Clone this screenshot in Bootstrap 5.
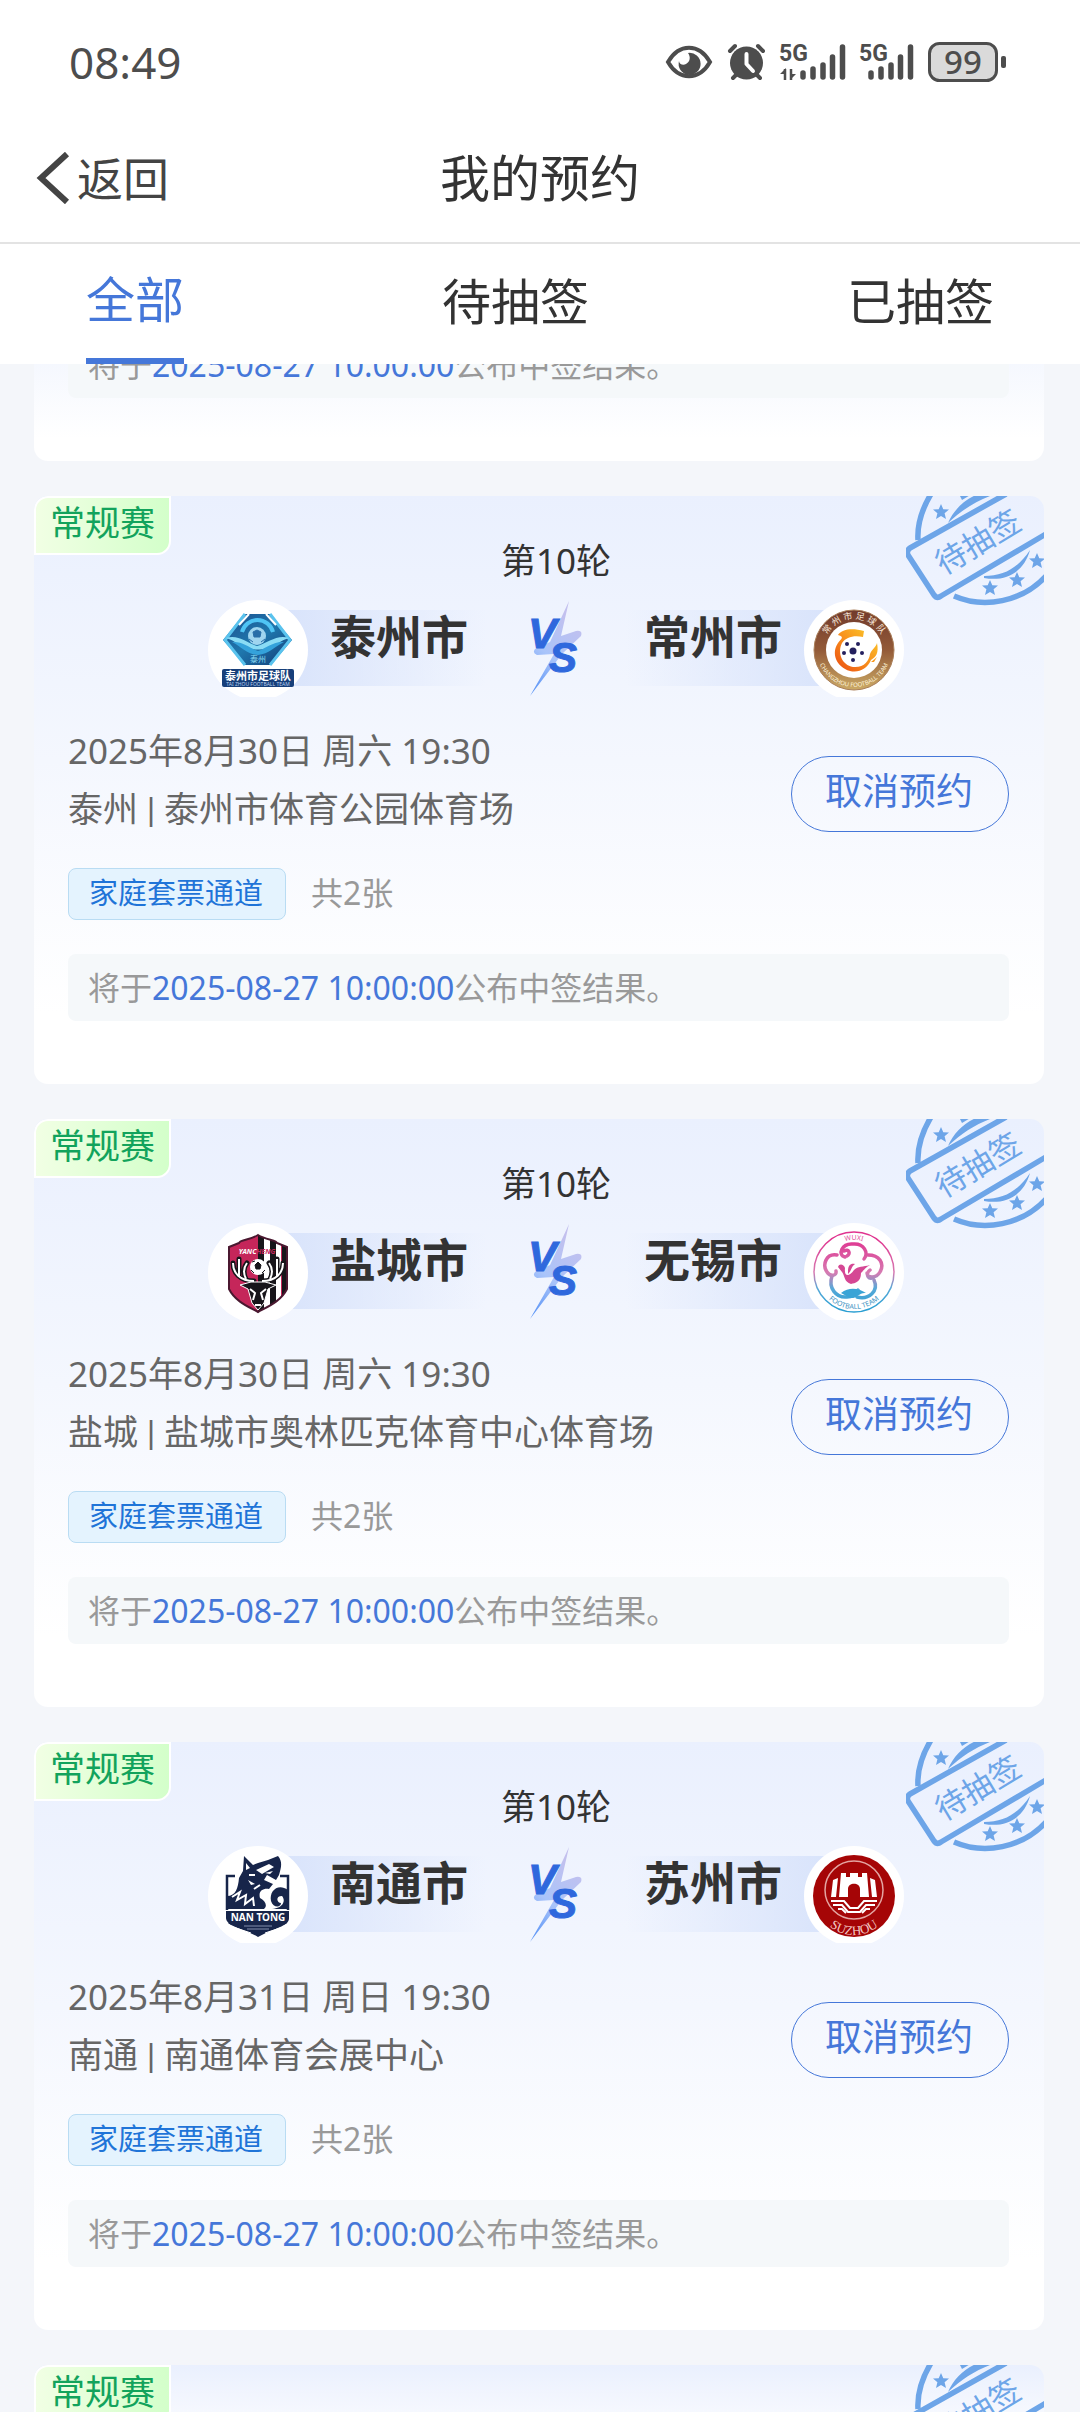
<!DOCTYPE html>
<html lang="zh-CN">
<head>
<meta charset="utf-8">
<meta name="viewport" content="width=device-width, initial-scale=1">
<title>我的预约</title>
<link rel="stylesheet" href="https://cdn.jsdelivr.net/npm/bootstrap@5.3.0/dist/css/bootstrap.min.css">
<style>
  :root { --brand: #4577d9; --ink: #333; --soft: #666; --faint: #999; }
  body { font-family: "Noto Sans", "Noto Sans CJK SC", sans-serif; color: var(--ink); background: #f4f6fa; }
  .status-bar { height: 114px; padding: 10px 74px 0 69px; color: #4d4d4d; }
  .clock { font-size: 44px; line-height: 56px; }
  .status-icons { gap: 14px; }
  .title-bar { height: 130px; border-bottom: 2px solid #e3e3e3; padding: 0 36px; }
  .title-bar h1 { font-size: 50px; line-height: 64px; font-weight: 400; }
  .back-link { gap: 7px; font-size: 46px; line-height: 64px; color: #444; }
  .side { flex: 1 1 0; }
  .tab-strip { padding: 0 86px; height: 120px; }
  .tab-strip .nav-link { padding: 25px 0 0; font-size: 49px; line-height: 64px; color: var(--ink); height: 120px; border: 0; border-radius: 0; background: none; }
  .tab-strip .nav-link.active { padding-top: 23px; color: var(--brand); background: none; border-bottom: 6px solid var(--brand); }
  .booking-list { padding: 0 36px 0 34px; gap: 35px; }
  .scrolled-card { height: 97px; }
  .match-card { background: linear-gradient(180deg, #eaf0fe 0%, #f4f7fe 45%, #fff 88%); border-radius: 14px; flex-shrink: 0; }
  .kind-tag { top: 0; left: 0; padding: 0 14px 6px; font-size: 35px; line-height: 49px; color: #12a35c; border: 2px solid #fff; border-radius: 14px 0; background: linear-gradient(90deg, #f1ffe4, #d3ffca); }
  .stamp { top: 0; right: 0; }
  .fixture { padding: 40px 0 0 34px; }
  .round-name { font-size: 35px; line-height: 50px; }
  .teams { margin-top: 14px; }
  .crest { z-index: 1; }
  .team-name { margin-top: 10px; height: 76px; font-size: 46px; line-height: 52px; font-weight: 700; }
  .team-home { margin-left: -30px; padding: 0 42px 0 52px; background: linear-gradient(90deg, #d8e3fb, #d8e3fb00 90%); }
  .team-away { margin-right: -30px; padding: 0 52px 0 42px; background: linear-gradient(270deg, #d8e3fb, #d8e3fb00 90%); }
  .versus { margin: 0 20px; }
  .versus text { font-family: "Liberation Sans", Arial, sans-serif; }
  .details { padding: 25px 35px 63px 34px; }
  .where { font-size: 35px; line-height: 58px; color: var(--soft); }
  .bar { font-family: Roboto, sans-serif; line-height: 1; }
  .btn-cancel { width: 218px; height: 76px; margin-bottom: 6px; padding: 0 2px 6px 0; font-size: 37px; line-height: 60px; color: var(--brand); border: 1px solid var(--brand); border-radius: 38px; }
  .ticket-row { margin-top: 30px; gap: 25px; }
  .channel-tag { height: 52px; padding: 0 22px 0 20px; font-size: 29px; line-height: 47px; color: #1f74d8; background: #e4f3fe; border: 1px solid #b9dcf3; border-radius: 8px; }
  .ticket-count { font-size: 32px; line-height: 50px; color: var(--faint); }
  .notice { margin-top: 34px; padding: 0 20px; font-size: 32px; line-height: 67px; height: 67px; color: var(--faint); background: #f5f8fa; border-radius: 8px; }
  .notice time { color: var(--brand); }
  svg { display: block; flex-shrink: 0; }
  svg text { font-family: "Noto Sans", "Noto Sans CJK SC", sans-serif; }
  .status-icons svg { overflow: visible; }
  .status-icons .net-label { font-family: Roboto, sans-serif; font-size: 23px; font-weight: 700; fill: #4d4d4d; }
</style>
</head>
<body>
<svg class="position-absolute" width="0" height="0" aria-hidden="true">
  <defs>
    <linearGradient id="boltFill" x1="0" y1="1" x2="0.4" y2="0"><stop offset="0" stop-color="#4f8df5"/><stop offset=".5" stop-color="#a9c4fa"/><stop offset="1" stop-color="#c3c0ee"/></linearGradient>
    <linearGradient id="blueFill" x1="0" y1="0" x2="1" y2="1"><stop offset="0" stop-color="#1c4f8e"/><stop offset=".5" stop-color="#1f77ad"/><stop offset="1" stop-color="#123a75"/></linearGradient>
    <linearGradient id="brownFill" x1="0" y1="0" x2="0" y2="1"><stop offset="0" stop-color="#713a2c"/><stop offset=".5" stop-color="#935a38"/><stop offset="1" stop-color="#cbaa66"/></linearGradient>
    <linearGradient id="flameFill" x1="0" y1="1" x2="1" y2="0"><stop offset="0" stop-color="#ea4a12"/><stop offset=".5" stop-color="#f8901c"/><stop offset="1" stop-color="#fbd02c"/></linearGradient>
    <linearGradient id="wuxiFill" gradientUnits="userSpaceOnUse" x1="0" y1="15" x2="0" y2="85"><stop offset="0" stop-color="#e0338f"/><stop offset=".5" stop-color="#d67bb2"/><stop offset=".72" stop-color="#58a9d8"/><stop offset="1" stop-color="#2c9fd2"/></linearGradient>
  </defs>
  <symbol id="star" viewBox="-8 -8 16 16"><path d="M0-8 2.3-2.8 8-2.4 3.6 1.2 5 7 0 4-5 7-3.6 1.2-8-2.4-2.3-2.8Z"/></symbol>
  <symbol id="stampArt" viewBox="0 0 138 110">
    <g fill="none" stroke="#6da5e8" stroke-width="5.500">
      <path d="M12 44C11 28 16 13 25-2"/>
      <path d="M48 100C78 113 116 106 140 80"/>
      <path d="M100-2 4 52Q0 55 2 59L28 99Q31 103 35 100L140 38" stroke-linejoin="round"/>
    </g>
    <g fill="#6da5e8">
      <path d="M42 27C48 13 60 2 75-3H92C72 4 58 12 42 27Z"/>
      <path d="M53-2H66L56 4Z"/>
      <path d="M78 80C98 80 112 72 124 54C118 76 100 86 78 82Z"/>
      <use href="#star" x="27" y="8" width="16" height="16"/>
      <use href="#star" x="76" y="84" width="16" height="16"/>
      <use href="#star" x="103" y="76" width="16" height="16"/>
      <use href="#star" x="123" y="57" width="16" height="16"/>
    </g>
  </symbol>
  <symbol id="bolt" viewBox="0 0 52 97">
    <path d="M39 1 20 42 5 49Q2 53 7 55L24 54 0 96 32 54 51 36Q53 30 46 31L31 36Z" fill="url(#boltFill)"/>
  </symbol>
</svg>

<div class="vh-100 d-flex flex-column overflow-hidden">
  <header class="bg-white flex-shrink-0">
    <div class="status-bar d-flex align-items-center justify-content-between">
      <span class="clock">08:49</span>
      <div class="status-icons d-flex align-items-center">
        <svg width="48" height="40" viewBox="0 0 48 40"><path d="M3 20C14 1 34 1 45 20C34 39 14 39 3 20Z" fill="none" stroke="#4d4d4d" stroke-width="4"/><path d="M23 11A11 11 0 1 1 14 19C14 22 18 24 21 22C25 20 26 15 23 11Z" fill="#4d4d4d"/></svg>
        <svg width="39" height="40" viewBox="0 0 39 40"><g stroke="#4d4d4d" stroke-width="4" stroke-linecap="round"><path d="M3 9 8 4M36 9 31 4M6 36 11 31M33 36 28 31"/></g><circle cx="19.500" cy="21" r="16.500" fill="#4d4d4d"/><path d="M19.500 12V22L26 29" fill="none" stroke="#fff" stroke-width="4" stroke-linecap="round" stroke-linejoin="round"/></svg>
        <svg width="66" height="40" viewBox="0 0 66 40"><text x="-1" y="19" class="net-label">5G</text><path d="M0 32 6 26V32M10 32V38L16 32" fill="#4d4d4d"/><path d="M5 27V38M11 27V38" stroke="#4d4d4d" stroke-width="2.500"/><g stroke="#4d4d4d" stroke-width="5.500" stroke-linecap="round"><path d="M23 31V35M33 27V35M43 23V35M52.500 15V35M62.500 5V35"/></g></svg>
        <svg width="54" height="40" viewBox="0 0 54 40"><text x="-1" y="19" class="net-label">5G</text><g stroke="#4d4d4d" stroke-width="5.500" stroke-linecap="round"><path d="M11 31V35M21 27V35M31 23V35M40.500 15V35M50.500 5V35"/></g></svg>
        <svg width="78" height="40" viewBox="0 0 78 40"><rect x="1.500" y="1.500" width="67" height="37" rx="10" fill="#dadada" stroke="#4d4d4d" stroke-width="3"/><rect x="73" y="14" width="5" height="12" rx="2" fill="#4d4d4d"/><text x="35" y="32" font-size="33" font-weight="500" text-anchor="middle" fill="#4d4d4d">99</text></svg>
      </div>
    </div>
    <div class="title-bar d-flex align-items-center">
      <div class="side"><a href="#" class="back-link d-inline-flex align-items-center text-decoration-none"><svg width="34" height="52" viewBox="0 0 34 52" fill="none" stroke="#444" stroke-width="6"><path d="M31 2 5 26 31 50"/></svg>返回</a></div>
      <h1 class="m-0">我的预约</h1>
      <div class="side"></div>
    </div>
    <nav class="tab-strip nav justify-content-between">
      <a class="nav-link active" aria-current="page" href="#">全部</a>
      <a class="nav-link" href="#">待抽签</a>
      <a class="nav-link" href="#">已抽签</a>
    </nav>
  </header>

  <main class="booking-list d-flex flex-column flex-grow-1 overflow-hidden">
    <div class="scrolled-card d-flex flex-column justify-content-end overflow-hidden flex-shrink-0">
      <article class="match-card">
        <div class="details"><p class="notice mb-0">将于<time>2025-08-27 10:00:00</time>公布中签结果。</p></div>
      </article>
    </div>

    <article class="match-card position-relative overflow-hidden">
      <span class="kind-tag position-absolute">常规赛</span>
      <svg class="stamp position-absolute" width="138" height="110" viewBox="0 0 138 110"><use href="#stampArt"/><text transform="translate(72 46) rotate(-31)" y="11" font-size="31" text-anchor="middle" fill="#6da5e8">待抽签</text></svg>
      <div class="fixture text-center">
        <div class="round-name">第10轮</div>
        <div class="teams d-flex justify-content-center">
          <svg class="crest position-relative" width="100" height="97" viewBox="0 0 100 97">
            <circle cx="50" cy="50" r="50" fill="#fff"/>
            <path d="M36 14H62L84 40 63 65H37L15 40Z" fill="url(#blueFill)"/>
            <path d="M37 14 17 40 37 65M62 14 82 40 62 65" fill="none" stroke="#59c3ee" stroke-width="3"/>
            <path d="M41 14 31 25M58 14 68 25" stroke="#fff" stroke-width="2"/>
            <path d="M34 32A16 16 0 0 1 65 32" fill="none" stroke="#4fc4f4" stroke-width="4"/>
            <path d="M18 38C30 34 39 43 49 46C60 43 69 34 81 38C73 40 69 45 60 48C53 50 45 50 38 48C30 45 26 40 18 38Z" fill="#8adcf5"/>
            <path d="M24 42C34 41 42 48 50 51C58 48 66 41 76 42C66 47 61 54 50 55C38 54 34 47 24 42Z" fill="#34a2db"/>
            <circle cx="49" cy="36" r="9" fill="#9fd5ef"/><path d="M45 32 49 30 53 32 52 37H46ZM41 39 45 42M57 39 53 42" fill="#286ea8" stroke="#286ea8"/>
            <text x="50" y="62" font-size="8" text-anchor="middle" fill="#8adcf5">泰州</text>
            <rect x="14" y="69" width="72" height="18" rx="2" fill="#173f7a"/>
            <text x="50" y="80" font-size="11" font-weight="700" text-anchor="middle" fill="#fff">泰州市足球队</text>
            <text x="50" y="86" font-size="5" text-anchor="middle" fill="#b9d0ee">TAI ZHOU FOOTBALL TEAM</text>
          </svg>
          <div class="team-name team-home">泰州市</div>
          <svg class="versus" width="52" height="97" viewBox="0 0 52 97"><use href="#bolt"/><g fill="#2f68dd" stroke="#2f68dd" font-weight="700" font-style="italic"><text x="-2" y="48" font-size="43">V</text><text x="19" y="72" font-size="42">S</text></g></svg>
          <div class="team-name team-away">常州市</div>
          <svg class="crest position-relative" width="100" height="97" viewBox="0 0 100 97">
            <circle cx="50" cy="50" r="50" fill="#fff"/><circle cx="50" cy="50" r="40" fill="url(#brownFill)" stroke="#a97d57"/><circle cx="50" cy="50" r="28" fill="#fff"/>
            <path id="czTop" d="M19 50A31 31 0 0 1 81 50" fill="none"/><path id="czLow" d="M13 50A37 37 0 0 0 87 50" fill="none"/>
            <text font-size="9" fill="#f5e6d8" text-anchor="middle"><textPath href="#czTop" startOffset="50%">常 州 市 足 球 队</textPath></text>
            <text font-size="6" fill="#fff5dc" text-anchor="middle"><textPath href="#czLow" startOffset="50%">CHANGZHOU FOOTBALL TEAM</textPath></text>
            <path d="M34 35C38 29 48 28 60 31L59 37C50 35 42 37 38 43C33 53 38 65 49 67C60 68 65 61 66 54C68 49 72 47 73 43C75 53 72 57 67 60C63 69 55 73 46 71C32 67 27 53 34 43C37 39 41 37 34 35ZM67 62 73 57 70 62Z" fill="url(#flameFill)"/>
            <circle cx="49" cy="51" r="12" fill="#fff"/><g fill="#24205e"><circle cx="49" cy="51" r="3.500"/><circle cx="43" cy="44" r="2"/><circle cx="54" cy="44" r="2"/><circle cx="40" cy="53" r="2"/><circle cx="58" cy="53" r="2"/><circle cx="49" cy="60" r="2"/></g>
          </svg>
        </div>
      </div>
      <div class="details">
        <div class="d-flex justify-content-between align-items-end">
          <div class="where"><div>2025年8月30日 周六 19:30</div><div>泰州<span class="bar"> | </span>泰州市体育公园体育场</div></div>
          <button type="button" class="btn btn-cancel">取消预约</button>
        </div>
        <div class="ticket-row d-flex"><span class="channel-tag">家庭套票通道</span><span class="ticket-count">共2张</span></div>
        <p class="notice mb-0">将于<time>2025-08-27 10:00:00</time>公布中签结果。</p>
      </div>
    </article>

    <article class="match-card position-relative overflow-hidden">
      <span class="kind-tag position-absolute">常规赛</span>
      <svg class="stamp position-absolute" width="138" height="110" viewBox="0 0 138 110"><use href="#stampArt"/><text transform="translate(72 46) rotate(-31)" y="11" font-size="31" text-anchor="middle" fill="#6da5e8">待抽签</text></svg>
      <div class="fixture text-center">
        <div class="round-name">第10轮</div>
        <div class="teams d-flex justify-content-center">
          <svg class="crest position-relative" width="100" height="97" viewBox="0 0 100 97">
            <circle cx="50" cy="50" r="50" fill="#fff"/>
            <clipPath id="ycShield"><path d="M50 12C42 17 31 17 31 20L21 24V66C27 78 39 83 50 89C61 83 73 78 79 66V24L69 20C69 17 58 17 50 12Z"/></clipPath>
            <g clip-path="url(#ycShield)"><path fill="#c5265a" d="M20 10H80V90H20Z"/><path fill="#17151a" d="M50 10H56V90H50ZM62 10H68V90H62ZM74 22H80V90H74Z"/><path fill="#fff" d="M56 10H62V90H56ZM68 10H73V90H68Z"/></g>
            <path d="M50 12C42 17 31 17 31 20L21 24V66C27 78 39 83 50 89C61 83 73 78 79 66V24L69 20C69 17 58 17 50 12Z" fill="none" stroke="#4a1830" stroke-width="2"/>
            <text x="49" y="31" font-size="7" font-weight="700" font-style="italic" text-anchor="middle" fill="#fff">YANC<tspan fill="#c5265a">HENG</tspan></text>
            <path d="M46 58C32 58 25 50 25 40M31 53V36M38 56C35 50 36 44 39 40M54 58C68 58 75 50 75 40M69 53V36M62 56C65 50 64 44 61 40" fill="none" stroke="#17151a" stroke-width="5" stroke-linecap="round"/>
            <path d="M46 58C32 58 25 50 25 40M31 53V36M38 56C35 50 36 44 39 40M54 58C68 58 75 50 75 40M69 53V36M62 56C65 50 64 44 61 40" fill="none" stroke="#fff" stroke-width="2"/>
            <path d="M32 62 43 59H57L68 62 60 66 56 80 50 87 44 80 40 66Z" fill="#17151a" stroke="#fff" stroke-width="1"/>
            <path d="M42 66 47 70 45 77M58 66 53 70 55 77M47 82H53" fill="none" stroke="#fff" stroke-width="2"/>
            <circle cx="50" cy="44" r="8" fill="#fff"/><path d="M47 42 50 39 53 42 52 46H48ZM43 47 46 50M57 47 54 50M44 39 47 38" fill="#17151a" stroke="#17151a"/>
          </svg>
          <div class="team-name team-home">盐城市</div>
          <svg class="versus" width="52" height="97" viewBox="0 0 52 97"><use href="#bolt"/><g fill="#2f68dd" stroke="#2f68dd" font-weight="700" font-style="italic"><text x="-2" y="48" font-size="43">V</text><text x="19" y="72" font-size="42">S</text></g></svg>
          <div class="team-name team-away">无锡市</div>
          <svg class="crest position-relative" width="100" height="97" viewBox="0 0 100 97">
            <circle cx="50" cy="50" r="50" fill="#fff"/><circle cx="50" cy="49" r="40" fill="none" stroke="url(#wuxiFill)" stroke-width="1.500"/>
            <path id="wxTop" d="M18 49A32 32 0 0 1 82 49" fill="none"/><path id="wxLow" d="M13 49A37 37 0 0 0 87 49" fill="none"/>
            <text font-size="7" fill="#df579f" text-anchor="middle"><textPath href="#wxTop" startOffset="50%">WUXI</textPath></text>
            <text font-size="7" fill="#3d92bf" text-anchor="middle"><textPath href="#wxLow" startOffset="50%">FOOTBALL TEAM</textPath></text>
            <g fill="none" stroke="url(#wuxiFill)" stroke-width="3.500" stroke-linecap="round"><path d="M41 34C33 32 38 20 49 21C60 20 65 30 60 36M40 28C45 25 47 31 43 33"/><path d="M33 32C22 30 18 42 23 49C26 54 33 53 32 48M64 32C75 32 81 40 76 49C72 56 63 55 63 50M66 47C60 52 66 58 70 54"/><path d="M28 53C24 65 32 75 43 74C48 74 52 71 54 67M70 57C75 68 65 77 53 74"/></g>
            <path d="M34 44C35 40 40 41 41 45C40 54 45 54 50 47C54 43 59 44 66 42C61 45 60 47 57 50C57 59 51 60 47 61C40 59 41 53 38 49ZM44 48C44 42 47 40 51 41C47 44 48 47 44 51Z" fill="#d54794"/>
            <path d="M37 70C45 64 54 65 62 70C55 69 53 76 46 75Z" fill="#3aa4d6"/>
          </svg>
        </div>
      </div>
      <div class="details">
        <div class="d-flex justify-content-between align-items-end">
          <div class="where"><div>2025年8月30日 周六 19:30</div><div>盐城<span class="bar"> | </span>盐城市奥林匹克体育中心体育场</div></div>
          <button type="button" class="btn btn-cancel">取消预约</button>
        </div>
        <div class="ticket-row d-flex"><span class="channel-tag">家庭套票通道</span><span class="ticket-count">共2张</span></div>
        <p class="notice mb-0">将于<time>2025-08-27 10:00:00</time>公布中签结果。</p>
      </div>
    </article>

    <article class="match-card position-relative overflow-hidden">
      <span class="kind-tag position-absolute">常规赛</span>
      <svg class="stamp position-absolute" width="138" height="110" viewBox="0 0 138 110"><use href="#stampArt"/><text transform="translate(72 46) rotate(-31)" y="11" font-size="31" text-anchor="middle" fill="#6da5e8">待抽签</text></svg>
      <div class="fixture text-center">
        <div class="round-name">第10轮</div>
        <div class="teams d-flex justify-content-center">
          <svg class="crest position-relative" width="100" height="97" viewBox="0 0 100 97">
            <circle cx="50" cy="50" r="50" fill="#fff"/>
            <path d="M27 30H19V64M72 30H80V64" fill="none" stroke="#17254a" stroke-width="2.500"/>
            <path d="M20 77H79C73 82 60 85 50 91C40 85 27 82 20 77Z" fill="#17254a"/>
            <path d="M18 65H81V72C81 76 78 78 75 79H24C21 78 18 75 18 72Z" fill="#17254a"/>
            <path d="M36 10 45 19 50 17 60 14 70 10C75 16 73 22 71 29L68 34 59 29 56 34 65 38 61 43C55 42 50 45 52 52C57 55 60 59 56 63H19V50C28 50 30 42 31 32L35 25Z" fill="#17254a"/>
            <path d="M38 17 42 22 38 24ZM48 24 61 18 66 21 54 28ZM40 34 47 38 43 39ZM57 27 65 25 62 28Z" fill="#fff"/>
            <path d="M24 51 32 46 29 54 38 49 37 58 45 52 46 60M52 39 46 43M47 29 41 29" fill="none" stroke="#fff" stroke-width="2"/>
            <path d="M80 63V44C70 37 61 45 63 55C65 62 73 62 73 57C69 57 67 50 74 50C79 56 73 64 60 63Z" fill="#17254a"/>
            <text x="50" y="75" font-size="10" font-weight="700" text-anchor="middle" fill="#fff">NAN TONG</text>
            <path d="M36 80H64M39 83H61" stroke="#8490ad"/><path d="M25 81 43 87M75 81 57 87" stroke="#fff"/>
          </svg>
          <div class="team-name team-home">南通市</div>
          <svg class="versus" width="52" height="97" viewBox="0 0 52 97"><use href="#bolt"/><g fill="#2f68dd" stroke="#2f68dd" font-weight="700" font-style="italic"><text x="-2" y="48" font-size="43">V</text><text x="19" y="72" font-size="42">S</text></g></svg>
          <div class="team-name team-away">苏州市</div>
          <svg class="crest position-relative" width="100" height="97" viewBox="0 0 100 97">
            <circle cx="50" cy="50" r="50" fill="#fff"/><circle cx="50" cy="50" r="41" fill="#a50506"/><circle cx="50" cy="44" r="29" fill="none" stroke="#e4a5a2" stroke-width="1.500"/>
            <path d="M37 27H42V31H46V27H54V31H58V27H63L65 51H56V43C56 36 44 36 44 43V51H35Z" fill="#fff"/>
            <path d="M29 34 34 32 32 51H27ZM71 34 66 32 68 51H73Z" fill="#fff"/>
            <path d="M27 55H40L46 62H54L60 55H73M29 59H38L44 66H56L62 59H71M34 63H38L42 67M66 63H62L58 67" fill="none" stroke="#fff" stroke-width="2"/>
            <path id="szLow" d="M11 50A39 39 0 0 0 89 50" fill="none"/>
            <text font-size="13" fill="#f3c9c5" text-anchor="middle" style="font-family:'Liberation Serif',serif"><textPath href="#szLow" startOffset="50%">SUZHOU</textPath></text>
          </svg>
        </div>
      </div>
      <div class="details">
        <div class="d-flex justify-content-between align-items-end">
          <div class="where"><div>2025年8月31日 周日 19:30</div><div>南通<span class="bar"> | </span>南通体育会展中心</div></div>
          <button type="button" class="btn btn-cancel">取消预约</button>
        </div>
        <div class="ticket-row d-flex"><span class="channel-tag">家庭套票通道</span><span class="ticket-count">共2张</span></div>
        <p class="notice mb-0">将于<time>2025-08-27 10:00:00</time>公布中签结果。</p>
      </div>
    </article>

    <article class="match-card position-relative overflow-hidden">
      <span class="kind-tag position-absolute">常规赛</span>
      <svg class="stamp position-absolute" width="138" height="110" viewBox="0 0 138 110"><use href="#stampArt"/><text transform="translate(72 46) rotate(-31)" y="11" font-size="31" text-anchor="middle" fill="#6da5e8">待抽签</text></svg>
      <div class="fixture text-center"><div class="round-name">第10轮</div></div>
    </article>
  </main>
</div>
<script src="https://cdn.jsdelivr.net/npm/bootstrap@5.3.0/dist/js/bootstrap.bundle.min.js"></script>
</body>
</html>
